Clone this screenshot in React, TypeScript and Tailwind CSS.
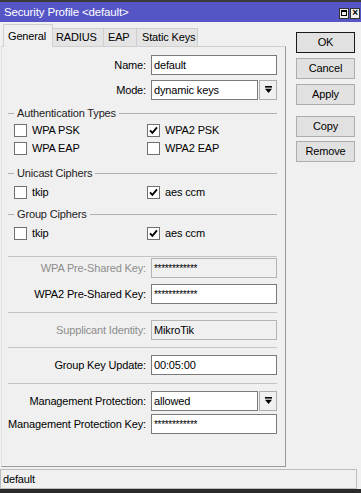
import React from "react";

const Box = ({ checked, label }: { checked?: boolean; label: string }) => (
  <div className="flex items-center h-[18px]">
    <span className="w-[13px] h-[13px] border border-[#707070] bg-white flex items-center justify-center">
      {checked && (
        <svg width="9" height="9" viewBox="0 0 9 9">
          <path d="M1 4.3L3.4 6.8L8 1.4" fill="none" stroke="#000" strokeWidth="1.8" />
        </svg>
      )}
    </span>
    <span className="ml-[5px]">{label}</span>
  </div>
);

const Arrow = () => (
  <div className="ml-[1px] w-[18px] h-[20px] border border-[#adadad] bg-[#f0f0f0] flex items-center justify-center">
    <svg width="7" height="8" viewBox="0 0 7 8">
      <rect x="0" y="0" width="7" height="1.6" fill="#000" />
      <polygon points="0,2.8 7,2.8 3.5,7" fill="#000" />
    </svg>
  </div>
);

const Field = ({
  label,
  value,
  off,
  select,
  secret,
  className,
}: {
  label: string;
  value: string;
  off?: boolean;
  select?: boolean;
  secret?: boolean;
  className?: string;
}) => (
  <div className={`flex items-center h-[20px] ${className ?? ""}`}>
    <span className={`w-[144px] text-right whitespace-nowrap ${off ? "text-[#8d8d8d]" : "text-black"}`}>{label}</span>
    <div className="ml-[5px] w-[126px] h-[20px] flex">
      <div
        className={`flex-1 h-[20px] border px-[2px] flex whitespace-nowrap overflow-hidden ${
          off ? "bg-[#f0f0f0] border-[#b4b4b4]" : "bg-white border-[#7a7a7a]"
        } ${secret ? "items-start pt-[2px] text-[10px] tracking-[-0.3px]" : "items-center"}`}
      >
        {value}
      </div>
      {select && <Arrow />}
    </div>
  </div>
);

const Group = ({ title, className }: { title: string; className?: string }) => (
  <div className={`flex items-center h-[16px] pl-[6px] pr-[8px] ${className ?? ""}`}>
    <span className="w-[6px] h-px bg-[#b0b0b0]" />
    <span className="mx-[3px] text-[#222]">{title}</span>
    <span className="flex-1 h-px bg-[#b0b0b0]" />
  </div>
);

const Sep = ({ className }: { className?: string }) => (
  <div className={`h-px bg-[#c4c4c4] ml-[6px] mr-[8px] ${className ?? ""}`} />
);

const Btn = ({ children, def }: { children: React.ReactNode; def?: boolean }) => (
  <div
    className={`h-[21px] flex items-center justify-center bg-[#e1e1e1] border ${
      def ? "border-[#1a1a1a]" : "border-[#adadad]"
    }`}
  >
    {children}
  </div>
);

const stars = "************";

export default function App() {
  return (
    <div className="w-[361px] h-[493px] bg-[#f0f0f0] flex flex-col text-[11px] tracking-[-0.15px] text-black font-['Liberation_Sans',Arial,sans-serif] overflow-hidden">
      <div className="h-[2px] bg-[#3a3a3a]" />
      <div className="h-[20px] bg-[#5555c6] flex items-center pl-[4px] pr-[1px] pt-[2px]">
        <span className="flex-1 text-white text-[11.5px]">Security Profile &lt;default&gt;</span>
        <div className="flex gap-[1px]">
          <div className="w-[10px] h-[11px] bg-[#f0f0f0] border border-[#333] flex items-center justify-center">
            <span className="w-[6px] h-[6px] border border-black border-t-2" />
          </div>
          <div className="w-[10px] h-[11px] bg-[#f0f0f0] border border-[#333] flex items-center justify-center text-[10px] font-bold leading-none">
            ×
          </div>
        </div>
      </div>

      <div className="flex flex-1 pt-[2px]">
        <div className="ml-[1px] w-[285px] flex flex-col">
          <div className="h-[23px] flex items-end pl-[2px] -mb-px relative z-10 whitespace-nowrap">
            <div className="h-[23px] w-[50px] bg-[#f0f0f0] border border-b-0 border-[#cfcfcf] flex items-center pl-[4px]">
              General
            </div>
            <div className="h-[19px] w-[51px] bg-[#e4e4e4] border-t border-r border-b border-[#cfcfcf] flex items-center pl-[3px]">
              RADIUS
            </div>
            <div className="h-[19px] w-[33px] bg-[#e4e4e4] border-t border-r border-b border-[#cfcfcf] flex items-center pl-[4px]">
              EAP
            </div>
            <div className="h-[19px] w-[61px] bg-[#e4e4e4] border-t border-r border-b border-[#cfcfcf] flex items-center pl-[5px]">
              Static Keys
            </div>
          </div>

          <div className="flex-1 border border-l-[#e2e2e2] border-t-[#cfcfcf] border-r-[#9a9a9a] border-b-[#9a9a9a] flex flex-col">
            <Field label="Name:" value="default" className="mt-[8px]" />
            <Field label="Mode:" value="dynamic keys" select className="mt-[5px]" />

            <Group title="Authentication Types" className="mt-[5px]" />
            <div className="grid grid-cols-[133px_1fr] pl-[12px]">
              <Box label="WPA PSK" />
              <Box label="WPA2 PSK" checked />
              <Box label="WPA EAP" />
              <Box label="WPA2 EAP" />
            </div>

            <Group title="Unicast Ciphers" className="mt-[8px]" />
            <div className="grid grid-cols-[133px_1fr] pl-[12px] mt-[2px]">
              <Box label="tkip" />
              <Box label="aes ccm" checked />
            </div>

            <Group title="Group Ciphers" className="mt-[5px]" />
            <div className="grid grid-cols-[133px_1fr] pl-[12px] mt-[2px]">
              <Box label="tkip" />
              <Box label="aes ccm" checked />
            </div>

            <Sep className="mt-[14px]" />
            <Field label="WPA Pre-Shared Key:" value={stars} off secret className="mt-[1px]" />
            <Field label="WPA2 Pre-Shared Key:" value={stars} secret className="mt-[6px]" />

            <Sep className="mt-[8px]" />
            <Field label="Supplicant Identity:" value="MikroTik" off className="mt-[7px]" />

            <Sep className="mt-[7px]" />
            <Field label="Group Key Update:" value="00:05:00" className="mt-[7px]" />

            <Sep className="mt-[8px]" />
            <Field label="Management Protection:" value="allowed" select className="mt-[7px]" />
            <Field label="Management Protection Key:" value={stars} secret className="mt-[3px]" />
          </div>
        </div>

        <div className="ml-[10px] w-[59px] pt-[8px] flex flex-col gap-[5px]">
          <Btn def>OK</Btn>
          <Btn>Cancel</Btn>
          <Btn>Apply</Btn>
          <div className="mt-[6px] flex flex-col gap-[4px]">
            <Btn>Copy</Btn>
            <Btn>Remove</Btn>
          </div>
        </div>
      </div>

      <div className="mt-[2px] mr-[4px] h-[20px] border border-[#bdbdbd] flex items-center pl-[2px]">default</div>
      <div className="h-[4px] bg-[#2a2a2a]" />
    </div>
  );
}
